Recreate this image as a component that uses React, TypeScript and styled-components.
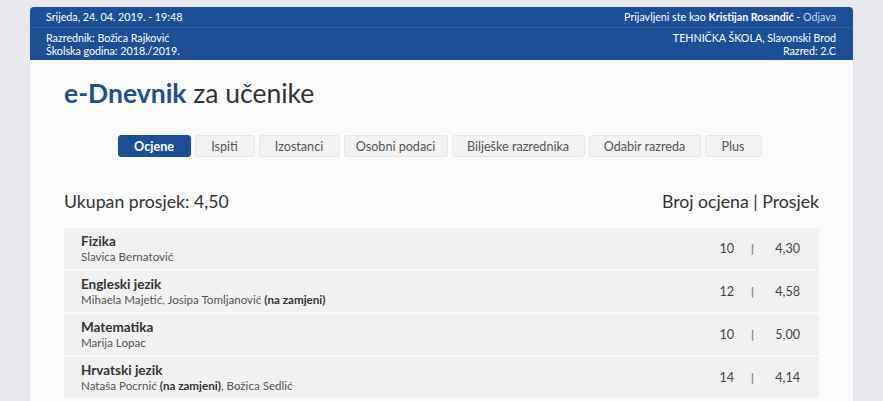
import React from "react";
import styled, { createGlobalStyle } from "styled-components";

const Global = createGlobalStyle`
  html, body { margin: 0; padding: 0; background: #e9e9ed; }
  body { font-family: Lato, "DejaVu Sans", sans-serif; color: #333; }
`;

const Page = styled.div`
  padding: 7px 30px 0 30px;
`;

const Card = styled.div`
  background: #fafafa;
  border-radius: 4px 4px 0 0;
  box-shadow: 0 0 2px rgba(0,0,0,0.08);
  min-height: 400px;
  overflow: hidden;
`;

const Header = styled.header`
  background: #1d4f96;
  color: #fff;
  font-size: 10.7px;
`;

const HeaderRow = styled.div<{ $top?: boolean }>`
  display: flex;
  justify-content: space-between;
  align-items: ${(p) => (p.$top ? "center" : "flex-start")};
  padding: ${(p) => (p.$top ? "0 17px 0 16px" : "4px 17px 3px 16px")};
  height: ${(p) => (p.$top ? "20px" : "auto")};
  border-bottom: ${(p) => (p.$top ? "1px solid #2d5fa6" : "none")};
  line-height: 12.5px;
`;

const RightText = styled.div`
  text-align: right;
`;

const Logout = styled.span`
  color: #c5d3ea;
`;

const Content = styled.main`
  padding: 17px 34px 0 34px;
`;

const Title = styled.h1`
  margin: 0;
  font-size: 26.5px;
  font-weight: 400;
  color: #333;
  line-height: 32px;
`;

const Brand = styled.span`
  color: #1f4f8f;
  font-weight: 700;
`;

const Tabs = styled.nav`
  display: flex;
  justify-content: center;
  gap: 4px;
  margin-top: 26px;
  padding-right: 4px;
`;

const Tab = styled.div<{ $active?: boolean; $w: number }>`
  width: ${(p) => p.$w}px;
  height: 22px;
  box-sizing: border-box;
  display: flex;
  align-items: center;
  justify-content: center;
  border-radius: 3px;
  font-size: 12.6px;
  background: ${(p) => (p.$active ? "#1d4f96" : "#f3f3f3")};
  border: 1px solid ${(p) => (p.$active ? "#1d4f96" : "#e6e6e6")};
  color: ${(p) => (p.$active ? "#fff" : "#555")};
  font-weight: ${(p) => (p.$active ? 700 : 400)};
`;

const SummaryRow = styled.div`
  display: flex;
  justify-content: space-between;
  align-items: center;
  margin-top: 34px;
  font-size: 17.7px;
  color: #333;
  line-height: 22px;
`;

const List = styled.div`
  display: flex;
  flex-direction: column;
  gap: 2px;
  margin-top: 15px;
`;

const Row = styled.div`
  display: flex;
  justify-content: space-between;
  align-items: center;
  height: 41px;
  padding: 0 19px 0 17px;
  background: #f1f1f1;
`;

const Subject = styled.div`
  font-size: 13.5px;
  font-weight: 700;
  color: #333;
  line-height: 15px;
`;

const Teacher = styled.div`
  font-size: 11.6px;
  color: #555;
  line-height: 13px;
  margin-top: 1px;
`;

const Strong = styled.b`
  color: #333;
`;

const Stats = styled.div`
  display: flex;
  align-items: center;
  font-size: 12.6px;
  color: #444;
`;

const Count = styled.span`
  width: 30px;
  text-align: right;
`;

const Sep = styled.span`
  width: 37px;
  text-align: center;
  font-family: "DejaVu Sans", sans-serif;
  font-weight: 700;
  font-size: 11px;
  color: #8a8a8a;
`;

const Avg = styled.span`
  width: 29px;
  text-align: right;
`;

type Item = { subject: string; teacher: React.ReactNode; count: number; avg: string };

const items: Item[] = [
  { subject: "Fizika", teacher: "Slavica Bernatović", count: 10, avg: "4,30" },
  {
    subject: "Engleski jezik",
    teacher: (
      <>
        Mihaela Majetić, Josipa Tomljanović <Strong>(na zamjeni)</Strong>
      </>
    ),
    count: 12,
    avg: "4,58",
  },
  { subject: "Matematika", teacher: "Marija Lopac", count: 10, avg: "5,00" },
  {
    subject: "Hrvatski jezik",
    teacher: (
      <>
        Nataša Pocrnić <Strong>(na zamjeni)</Strong>, Božica Sedlić
      </>
    ),
    count: 14,
    avg: "4,14",
  },
];

const tabs: { label: string; w: number; active?: boolean }[] = [
  { label: "Ocjene", w: 73, active: true },
  { label: "Ispiti", w: 60 },
  { label: "Izostanci", w: 81 },
  { label: "Osobni podaci", w: 104 },
  { label: "Bilješke razrednika", w: 133 },
  { label: "Odabir razreda", w: 112 },
  { label: "Plus", w: 57 },
];

export default function App() {
  return (
    <>
      <Global />
      <Page>
        <Card>
          <Header>
            <HeaderRow $top>
              <span>Srijeda, 24. 04. 2019. - 19:48</span>
              <span>
                Prijavljeni ste kao <b>Kristijan Rosandić</b> - <Logout>Odjava</Logout>
              </span>
            </HeaderRow>
            <HeaderRow>
              <div>
                Razrednik: Božica Rajković
                <br />
                Školska godina: 2018./2019.
              </div>
              <RightText>
                TEHNIČKA ŠKOLA, Slavonski Brod
                <br />
                Razred: 2.C
              </RightText>
            </HeaderRow>
          </Header>
          <Content>
            <Title>
              <Brand>e-Dnevnik</Brand> za učenike
            </Title>
            <Tabs>
              {tabs.map((t) => (
                <Tab key={t.label} $active={t.active} $w={t.w}>
                  {t.label}
                </Tab>
              ))}
            </Tabs>
            <SummaryRow>
              <span>Ukupan prosjek: 4,50</span>
              <span>Broj ocjena | Prosjek</span>
            </SummaryRow>
            <List>
              {items.map((it) => (
                <Row key={it.subject}>
                  <div>
                    <Subject>{it.subject}</Subject>
                    <Teacher>{it.teacher}</Teacher>
                  </div>
                  <Stats>
                    <Count>{it.count}</Count>
                    <Sep>|</Sep>
                    <Avg>{it.avg}</Avg>
                  </Stats>
                </Row>
              ))}
            </List>
          </Content>
        </Card>
      </Page>
    </>
  );
}
